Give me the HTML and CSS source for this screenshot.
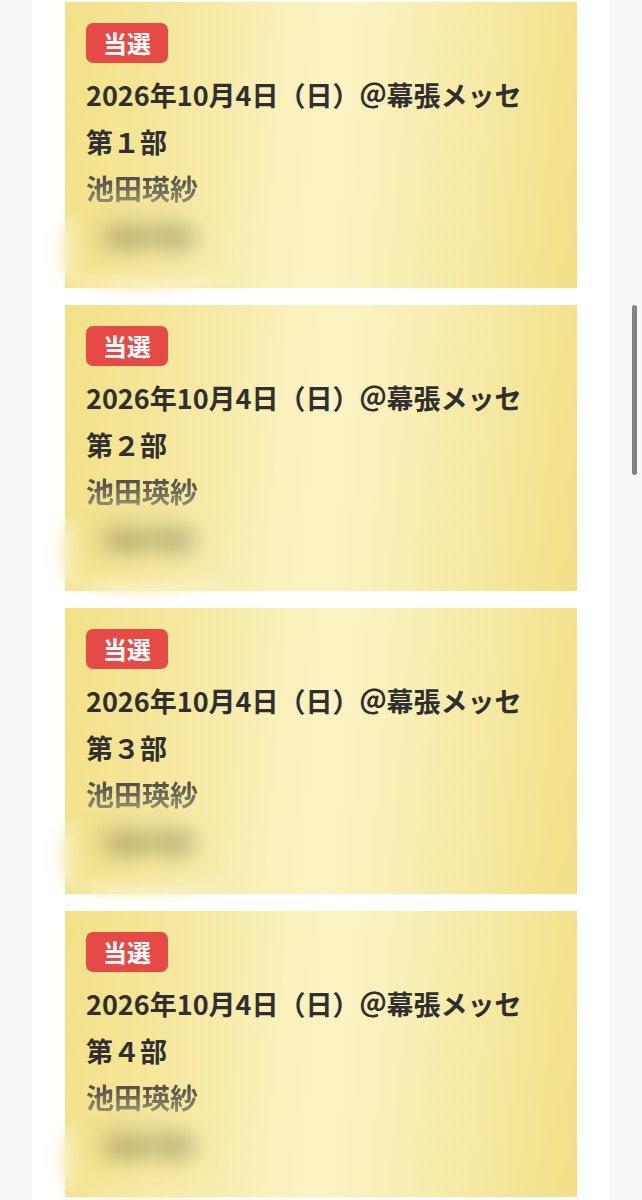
FILE: index.html
```html
<!DOCTYPE html>
<html lang="ja">
<head>
<meta charset="utf-8">
<title>当選</title>
<link rel="stylesheet" href="styles.css">
</head>
<body>
<main class="column">
  <section class="card">
    <span class="badge">当選</span>
    <p class="date">2026年10月4日（日）＠幕張メッセ</p>
    <p class="part">第１部</p>
    <p class="name">池田瑛紗</p>
    <p class="secret">（ほげほ）</p>
    <div class="veil"></div>
  </section>
  <section class="card">
    <span class="badge">当選</span>
    <p class="date">2026年10月4日（日）＠幕張メッセ</p>
    <p class="part">第２部</p>
    <p class="name">池田瑛紗</p>
    <p class="secret">（ほげほ）</p>
    <div class="veil"></div>
  </section>
  <section class="card">
    <span class="badge">当選</span>
    <p class="date">2026年10月4日（日）＠幕張メッセ</p>
    <p class="part">第３部</p>
    <p class="name">池田瑛紗</p>
    <p class="secret">（ほげほ）</p>
    <div class="veil"></div>
  </section>
  <section class="card">
    <span class="badge">当選</span>
    <p class="date">2026年10月4日（日）＠幕張メッセ</p>
    <p class="part">第４部</p>
    <p class="name">池田瑛紗</p>
    <p class="secret">（ほげほ）</p>
    <div class="veil"></div>
  </section>
</main>
<div class="scrollbar"></div>
</body>
</html>
```

FILE: styles.css
```css
html, body {
  margin: 0;
  padding: 0;
}
body {
  background: #f7f7f7;
  font-family: "Noto Sans CJK JP", "Noto Sans", sans-serif;
  color: #333333;
}
.column {
  width: 578px;
  margin-left: 32px;
  background: #ffffff;
  padding: 2px 33px 0 33px;
  box-sizing: border-box;
  display: flex;
  flex-direction: column;
  gap: 17px;
  min-height: 1200px;
}
.card {
  position: relative;
  height: 286px;
  box-sizing: border-box;
  padding: 21px 21px 0 21px;
  background: linear-gradient(95deg, #f2e187 0%, #f5e79e 22%, #faf1bb 42%, #fbf3c3 52%, #f8eeb3 68%, #f4e69a 86%, #f1e086 100%);
  display: flex;
  flex-direction: column;
  align-items: flex-start;
}
.badge {
  display: block;
  height: 40px;
  line-height: 40px;
  padding: 0 17px;
  background: #e64a47;
  color: #ffffff;
  border-radius: 7px;
  font-size: 24px;
  font-weight: 700;
  margin-bottom: 8px;
}
.date, .part, .name, .secret {
  margin: 0;
  font-size: 27px;
  line-height: 47px;
  font-weight: 700;
  white-space: nowrap;
}
.date, .part {
  color: #2f2f2f;
}
.name {
  font-size: 28px;
  color: #6a675a;
  background: linear-gradient(180deg, #54524a 30%, #8c8870 75%);
  -webkit-background-clip: text;
  background-clip: text;
  -webkit-text-fill-color: transparent;
}
.secret {
  font-size: 25px;
  color: #6a6444;
}
.veil {
  position: absolute;
  left: -34px;
  top: 196px;
  width: 225px;
  height: 104px;
  backdrop-filter: blur(11px);
  -webkit-backdrop-filter: blur(11px);
  -webkit-mask-image: radial-gradient(ellipse 50% 50% at 50% 50%, #000 70%, transparent 100%);
  mask-image: radial-gradient(ellipse 50% 50% at 50% 50%, #000 70%, transparent 100%);
}
.scrollbar {
  position: fixed;
  right: 5px;
  top: 305px;
  width: 5px;
  height: 170px;
  border-radius: 3px;
  background: #838383;
}
```
